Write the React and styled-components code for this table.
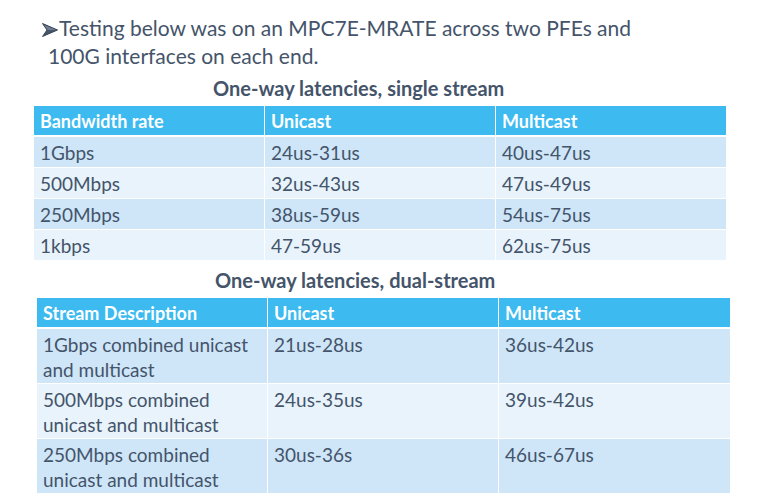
import styled, { createGlobalStyle } from "styled-components";

const GlobalStyle = createGlobalStyle`
  html, body {
    margin: 0;
    padding: 0;
    background: #ffffff;
  }
  body {
    font-family: Lato, "Open Sans", sans-serif;
    color: #44546a;
  }
`;

const singleStream = [
  ["1Gbps", "24us-31us", "40us-47us"],
  ["500Mbps", "32us-43us", "47us-49us"],
  ["250Mbps", "38us-59us", "54us-75us"],
  ["1kbps", "47-59us", "62us-75us"],
];

const dualStream = [
  ["1Gbps combined unicast and multicast", "21us-28us", "36us-42us"],
  ["500Mbps combined unicast and multicast", "24us-35us", "39us-42us"],
  ["250Mbps combined unicast and multicast", "30us-36s", "46us-67us"],
];

const ArrowHead = () => (
  <Arrow viewBox="0 0 16 14" aria-hidden="true">
    <polygon points="0.5,0.5 15.5,7 0.5,13.5 5,7" fill="#44546a" />
    <polygon points="0.5,0.5 15.5,7 5,7" fill="#6f7d90" />
    <polyline
      points="0.5,0.5 15.5,7 0.5,13.5 5,7 0.5,0.5"
      fill="none"
      stroke="#2f3b4c"
      strokeWidth="0.9"
      strokeLinejoin="round"
    />
  </Arrow>
);

const LatencyTable = ({ offset, columns, head, rows, rowHeight, align }) => (
  <Grid $offset={offset} $columns={columns} $rowHeight={rowHeight}>
    {head.map((h) => (
      <HeadCell key={h}>{h}</HeadCell>
    ))}
    {rows.map((row, i) =>
      row.map((value, j) => (
        <Cell key={`${i}-${j}`} $odd={i % 2 === 0} $align={align}>
          {value}
        </Cell>
      ))
    )}
  </Grid>
);

export default function App() {
  return (
    <>
      <GlobalStyle />
      <Slide>
        <Bullet>
          <ArrowHead />
          Testing below was on an MPC7E-MRATE across two PFEs and
          <br />
          100G interfaces on each end.
        </Bullet>
        <Caption $indent={213} $top={6}>
          One-way latencies, single stream
        </Caption>
        <LatencyTable
          offset={34}
          columns="230px 230px 230px"
          rowHeight={30}
          align="center"
          head={["Bandwidth rate", "Unicast", "Multicast"]}
          rows={singleStream}
        />
        <Caption $indent={215} $top={8}>
          One-way latencies, dual-stream
        </Caption>
        <LatencyTable
          offset={37}
          columns="230px 230px 231px"
          rowHeight={54}
          align="start"
          head={["Stream Description", "Unicast", "Multicast"]}
          rows={dualStream}
        />
      </Slide>
    </>
  );
}

const Slide = styled.div`
  width: 775px;
  height: 502px;
  overflow: hidden;
  padding-top: 14px;
  box-sizing: border-box;
`;

const Bullet = styled.p`
  margin: 0;
  padding-left: 48px;
  text-indent: -6px;
  font-size: 21px;
  line-height: 28px;
  color: #44546a;
`;

const Arrow = styled.svg`
  display: inline-block;
  width: 16px;
  height: 14px;
  margin-right: 1px;
  vertical-align: -1px;
`;

const Caption = styled.h2`
  margin: ${(p) => p.$top}px 0 0 ${(p) => p.$indent}px;
  font-size: 20px;
  font-weight: 700;
  line-height: 24px;
  color: #44546a;
`;

const Grid = styled.div`
  display: grid;
  grid-template-columns: ${(p) => p.$columns};
  grid-template-rows: 30px;
  grid-auto-rows: ${(p) => p.$rowHeight}px;
  column-gap: 1px;
  row-gap: 1px;
  margin: 6px 0 0 ${(p) => p.$offset}px;
  width: max-content;
`;

const HeadCell = styled.div`
  background: #3dbaf0;
  color: #ffffff;
  font-weight: 700;
  font-size: 18px;
  padding: 0 6px;
  display: flex;
  align-items: center;
  margin-bottom: 1px;
`;

const Cell = styled.div`
  background: ${(p) => (p.$odd ? "#cfe6f9" : "#e8f3fc")};
  color: #44546a;
  font-size: 19px;
  line-height: 25px;
  padding: ${(p) => (p.$align === "start" ? "3px 6px 0" : "0 6px")};
  display: flex;
  align-items: ${(p) => (p.$align === "start" ? "flex-start" : "center")};
`;
